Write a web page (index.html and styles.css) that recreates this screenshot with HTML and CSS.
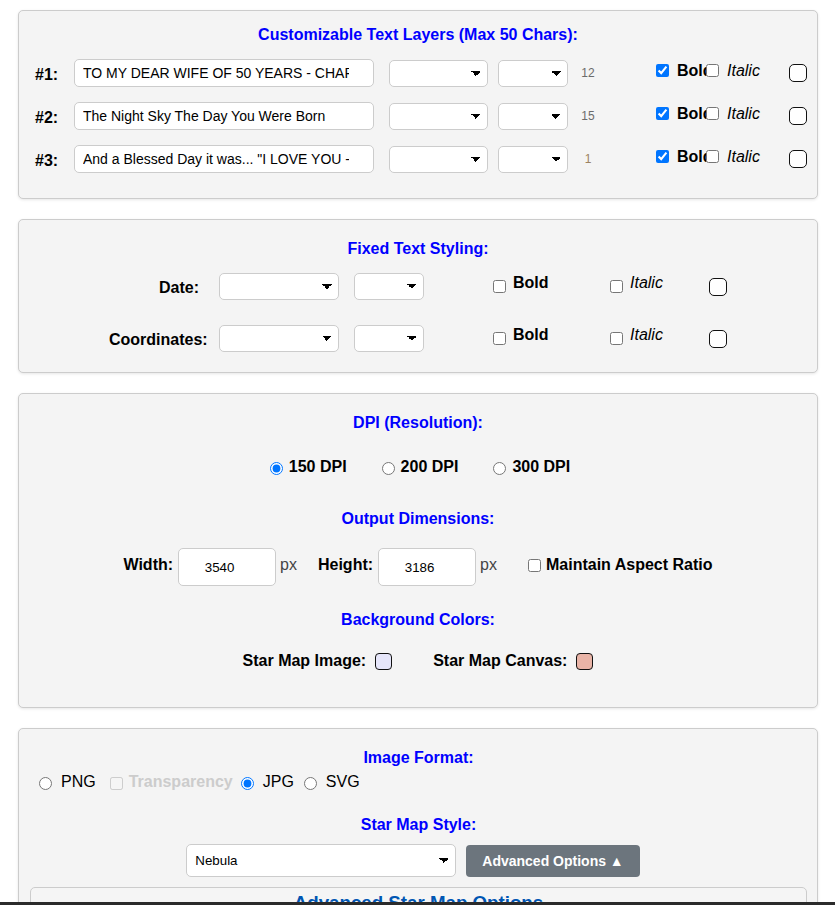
FILE: index.html
```html
<!DOCTYPE html>
<html lang="en">
<head>
<meta charset="utf-8">
<title>Star Map Options</title>
<link rel="stylesheet" href="styles.css">
</head>
<body>
<div class="page">

  <section class="panel panel-layers">
    <h3 class="title">Customizable Text Layers (Max 50 Chars):</h3>

    <div class="layer-row">
      <span class="layer-label">#1:</span>
      <input class="text-in" type="text" value="TO MY DEAR WIFE OF 50 YEARS - CHARLENE">
      <select class="sel sel-font"><option></option></select>
      <select class="sel sel-size"><option></option></select>
      <span class="count">12</span>
      <label class="opt opt-bold"><input type="checkbox" checked><span class="lbl-bold">Bold</span></label>
      <label class="opt opt-italic"><input type="checkbox"><span class="lbl-italic">Italic</span></label>
      <span class="swatch swatch-row"></span>
    </div>

    <div class="layer-row">
      <span class="layer-label">#2:</span>
      <input class="text-in" type="text" value="The Night Sky The Day You Were Born">
      <select class="sel sel-font"><option></option></select>
      <select class="sel sel-size"><option></option></select>
      <span class="count">15</span>
      <label class="opt opt-bold"><input type="checkbox" checked><span class="lbl-bold">Bold</span></label>
      <label class="opt opt-italic"><input type="checkbox"><span class="lbl-italic">Italic</span></label>
      <span class="swatch swatch-row"></span>
    </div>

    <div class="layer-row">
      <span class="layer-label">#3:</span>
      <input class="text-in" type="text" value="And a Blessed Day it was... &quot;I LOVE YOU - ALWAYS&quot;">
      <select class="sel sel-font"><option></option></select>
      <select class="sel sel-size"><option></option></select>
      <span class="count count-low">1</span>
      <label class="opt opt-bold"><input type="checkbox" checked><span class="lbl-bold">Bold</span></label>
      <label class="opt opt-italic"><input type="checkbox"><span class="lbl-italic">Italic</span></label>
      <span class="swatch swatch-row"></span>
    </div>
  </section>

  <section class="panel panel-fixed">
    <h3 class="title">Fixed Text Styling:</h3>

    <div class="fixed-row">
      <span class="fixed-label">Date:</span>
      <select class="sel sel-ffont"><option></option></select>
      <select class="sel sel-fsize"><option></option></select>
      <label class="opt2 opt2-bold"><input type="checkbox"><span class="lbl-bold">Bold</span></label>
      <label class="opt2 opt2-italic"><input type="checkbox"><span class="lbl-italic">Italic</span></label>
      <span class="swatch swatch-row"></span>
    </div>

    <div class="fixed-row">
      <span class="fixed-label">Coordinates:</span>
      <select class="sel sel-ffont"><option></option></select>
      <select class="sel sel-fsize"><option></option></select>
      <label class="opt2 opt2-bold"><input type="checkbox"><span class="lbl-bold">Bold</span></label>
      <label class="opt2 opt2-italic"><input type="checkbox"><span class="lbl-italic">Italic</span></label>
      <span class="swatch swatch-row"></span>
    </div>
  </section>

  <section class="panel panel-output">
    <h3 class="title">DPI (Resolution):</h3>
    <div class="dpi-row">
      <label class="radio-opt"><input type="radio" name="dpi" checked><span>150 DPI</span></label>
      <label class="radio-opt"><input type="radio" name="dpi"><span>200 DPI</span></label>
      <label class="radio-opt"><input type="radio" name="dpi"><span>300 DPI</span></label>
    </div>

    <h3 class="title title-gap">Output Dimensions:</h3>
    <div class="dim-row">
      <span class="dim-label">Width:</span>
      <input class="num-in" type="number" value="3540">
      <span class="unit">px</span>
      <span class="dim-label">Height:</span>
      <input class="num-in" type="number" value="3186">
      <span class="unit unit-last">px</span>
      <label class="aspect"><input type="checkbox"><span>Maintain Aspect Ratio</span></label>
    </div>

    <h3 class="title title-gap2">Background Colors:</h3>
    <div class="colors-row">
      <span class="color-label">Star Map Image:</span>
      <span class="swatch swatch-color swatch-image"></span>
      <span class="color-label">Star Map Canvas:</span>
      <span class="swatch swatch-color swatch-canvas"></span>
    </div>
  </section>

  <section class="panel panel-format">
    <h3 class="title title-format">Image Format:</h3>
    <div class="format-row">
      <input class="fmt-radio" type="radio" name="fmt">
      <span class="fmt-text">PNG</span>
      <input class="fmt-check" type="checkbox" disabled>
      <span class="fmt-trans">Transparency</span>
      <input class="fmt-radio fmt-radio-jpg" type="radio" name="fmt" checked>
      <span class="fmt-text">JPG</span>
      <input class="fmt-radio fmt-radio-svg" type="radio" name="fmt">
      <span class="fmt-text">SVG</span>
    </div>

    <h3 class="title title-style">Star Map Style:</h3>
    <div class="style-row">
      <select class="sel style-sel"><option>Nebula</option></select>
      <button class="adv-btn" type="button">Advanced Options ▲</button>
    </div>

    <div class="adv-panel">
      <h3 class="adv-title">Advanced Star Map Options</h3>
    </div>
  </section>

</div>
<div class="bottom-bar"></div>
</body>
</html>
```
FILE: styles.css
```css
html, body {
  margin: 0;
  background: #ffffff;
}

body {
  font-family: "Liberation Sans", Arial, sans-serif;
  font-size: 16px;
  color: #000;
}

.page {
  width: 800px;
  margin-left: 18px;
  padding: 10px 0 60px;
}

.panel {
  box-sizing: border-box;
  background: #f4f4f4;
  border: 1px solid #cccccc;
  border-radius: 5px;
  box-shadow: 0 1px 3px rgba(0, 0, 0, 0.1);
}

.panel + .panel {
  margin-top: 20px;
}

.title {
  margin: 0;
  font-size: 16px;
  line-height: 18px;
  font-weight: bold;
  color: #0000ff;
  text-align: center;
}

/* ---------- panel 1 ---------- */
.panel-layers {
  padding: 15px 0 25px;
}

.panel-layers .title {
  margin-bottom: 15px;
}

.layer-row {
  display: flex;
  align-items: center;
  height: 28px;
  padding-left: 16px;
}

.layer-row + .layer-row {
  margin-top: 15px;
}

.layer-label {
  flex: none;
  width: 39px;
  font-weight: bold;
  font-size: 16px;
  padding-top: 3px;
}

.text-in {
  flex: none;
  box-sizing: border-box;
  width: 300px;
  height: 28px;
  margin: 0 15px 0 0;
  padding: 0 24px 0 8px;
  border: 1px solid #cccccc;
  border-radius: 5px;
  background: #fff;
  font-family: "Liberation Sans", Arial, sans-serif;
  font-size: 14px;
  color: #000;
}

.sel {
  flex: none;
  box-sizing: border-box;
  height: 27px;
  margin: 0;
  padding: 0 20px 0 8px;
  border: 1px solid #cccccc;
  border-radius: 5px;
  -webkit-appearance: none;
  appearance: none;
  background-color: #fff;
  background-image:
    linear-gradient(to bottom left, #000 50%, transparent 50%),
    linear-gradient(to bottom right, #000 50%, transparent 50%);
  background-size: 5px 5px, 5px 5px;
  background-position: right 11px center, right 6px center;
  background-repeat: no-repeat;
  font-family: "Liberation Sans", Arial, sans-serif;
  font-size: 13.33px;
  color: #000;
}

.sel-font {
  width: 99px;
  margin-right: 10px;
}

.sel-size {
  width: 70px;
  margin-right: 9px;
}

.count {
  flex: none;
  width: 22px;
  text-align: center;
  font-size: 12px;
  color: #6b6b6b;
  margin-right: 53px;
}

.count-low {
  color: #9c8262;
}

.opt {
  display: flex;
  align-items: center;
  flex: none;
  white-space: nowrap;
  font-size: 16px;
  margin-bottom: 5px;
}

.opt input {
  flex: none;
  width: 13px;
  height: 13px;
  margin: 0 8px 0 4px;
}

.opt-bold {
  width: 50px;
}

.opt-italic {
  width: 87px;
}

.lbl-bold {
  font-weight: bold;
}

.lbl-italic {
  font-style: italic;
}

.swatch {
  flex: none;
  box-sizing: border-box;
  display: block;
  border: 1px solid #111;
  border-radius: 5px;
}

.swatch-row {
  width: 18px;
  height: 18px;
  background: #fff;
}

/* ---------- panel 2 ---------- */
.panel-fixed {
  padding: 20px 0 20px;
}

.panel-fixed .title {
  margin-bottom: 15px;
}

.fixed-row {
  display: flex;
  justify-content: center;
  align-items: center;
  height: 27px;
}

.fixed-row + .fixed-row {
  margin-top: 25px;
}

.fixed-label {
  flex: none;
  width: 90px;
  min-width: 0;
  margin-right: 20px;
  text-align: right;
  white-space: nowrap;
  font-weight: bold;
  padding-top: 3px;
}

.sel-ffont {
  width: 120px;
  margin-right: 15px;
}

.sel-fsize {
  width: 70px;
  margin-right: 65px;
}

.opt2 {
  display: flex;
  align-items: center;
  flex: none;
  white-space: nowrap;
}

.opt2 input {
  flex: none;
  width: 13px;
  height: 13px;
  margin: 0 7px 0 4px;
}

.opt2 span {
  margin-bottom: 7px;
}

.opt2-bold {
  width: 117px;
}

.opt2-italic {
  width: 103px;
}

/* ---------- panel 3 ---------- */
.panel-output {
  padding: 20px 0 36px;
}

.dpi-row {
  display: flex;
  justify-content: center;
  align-items: center;
  gap: 35px;
  height: 20px;
  margin-top: 25px;
  padding-left: 4px;
}

.radio-opt {
  display: flex;
  align-items: center;
  font-weight: bold;
}

.radio-opt input {
  width: 13px;
  height: 13px;
  margin: 2px 6px 0 0;
}

.title-gap {
  margin-top: 33px;
}

.dim-row {
  display: flex;
  justify-content: center;
  align-items: center;
  height: 38px;
  margin-top: 20px;
}

.dim-label {
  font-weight: bold;
  margin: 0 5px 5px 0;
}

.num-in {
  flex: none;
  box-sizing: border-box;
  width: 98px;
  height: 38px;
  margin: 0;
  padding: 0 8px;
  border: 1px solid #cccccc;
  border-radius: 5px;
  background: #fff;
  text-align: center;
  font-family: "Liberation Sans", Arial, sans-serif;
  font-size: 13.33px;
  color: #000;
}

.unit {
  color: #444;
  margin: 0 21px 5px 4px;
}

.unit-last {
  margin-right: 31px;
}

.aspect {
  display: flex;
  align-items: center;
  font-weight: bold;
  margin-bottom: 4px;
}

.aspect input {
  width: 13px;
  height: 13px;
  margin: 0 5px 0 0;
}

.aspect span {
  margin-bottom: 1px;
}

.title-gap2 {
  margin-top: 25px;
}

.colors-row {
  display: flex;
  justify-content: center;
  align-items: center;
  height: 20px;
  margin-top: 22px;
}

.color-label {
  font-weight: bold;
  margin-right: 9px;
}

.swatch-color {
  width: 17px;
  height: 17px;
  border-radius: 4px;
}

.swatch-image {
  background: #e6e6fa;
  margin-right: 41px;
}

.swatch-canvas {
  background: #e9b4a7;
}

/* ---------- panel 4 ---------- */
.panel-format {
  padding: 20px 10px 0 11px;
}

.title-format {
  margin-bottom: 5px;
}

.format-row {
  display: flex;
  align-items: center;
  height: 20px;
  padding-left: 9px;
}

.fmt-radio {
  flex: none;
  width: 13px;
  height: 13px;
  margin: 2px 0 0 0;
}

.fmt-radio-jpg {
  margin-left: 8px;
}

.fmt-radio-svg {
  margin-left: 10px;
}

.fmt-text {
  margin-left: 9px;
}

.fmt-check {
  flex: none;
  width: 13px;
  height: 13px;
  margin: 2px 0 0 14px;
}

.fmt-trans {
  margin-left: 6px;
  font-weight: bold;
  color: #cccccc;
}

.title-style {
  margin-top: 24px;
}

.style-row {
  display: flex;
  justify-content: center;
  align-items: center;
  margin-top: 10px;
  padding-right: 11px;
}

.style-sel {
  width: 270px;
  height: 33px;
}

.adv-btn {
  flex: none;
  height: 32px;
  margin: 0 0 0 10px;
  padding: 0 16px;
  border: none;
  border-radius: 4px;
  background: #6c757d;
  color: #fff;
  font-family: "Liberation Sans", Arial, sans-serif;
  font-weight: bold;
  font-size: 14px;
}

.adv-panel {
  margin-top: 10px;
  padding: 4px 10px 40px;
  border: 1px solid #cccccc;
  border-radius: 5px;
  background: #f5f5f5;
}

.adv-title {
  margin: 0;
  font-size: 18.72px;
  font-weight: bold;
  color: #0056b3;
  text-align: center;
}

.bottom-bar {
  position: fixed;
  left: 0;
  right: 0;
  bottom: 0;
  height: 3px;
  background: #2b2b2b;
}
```
